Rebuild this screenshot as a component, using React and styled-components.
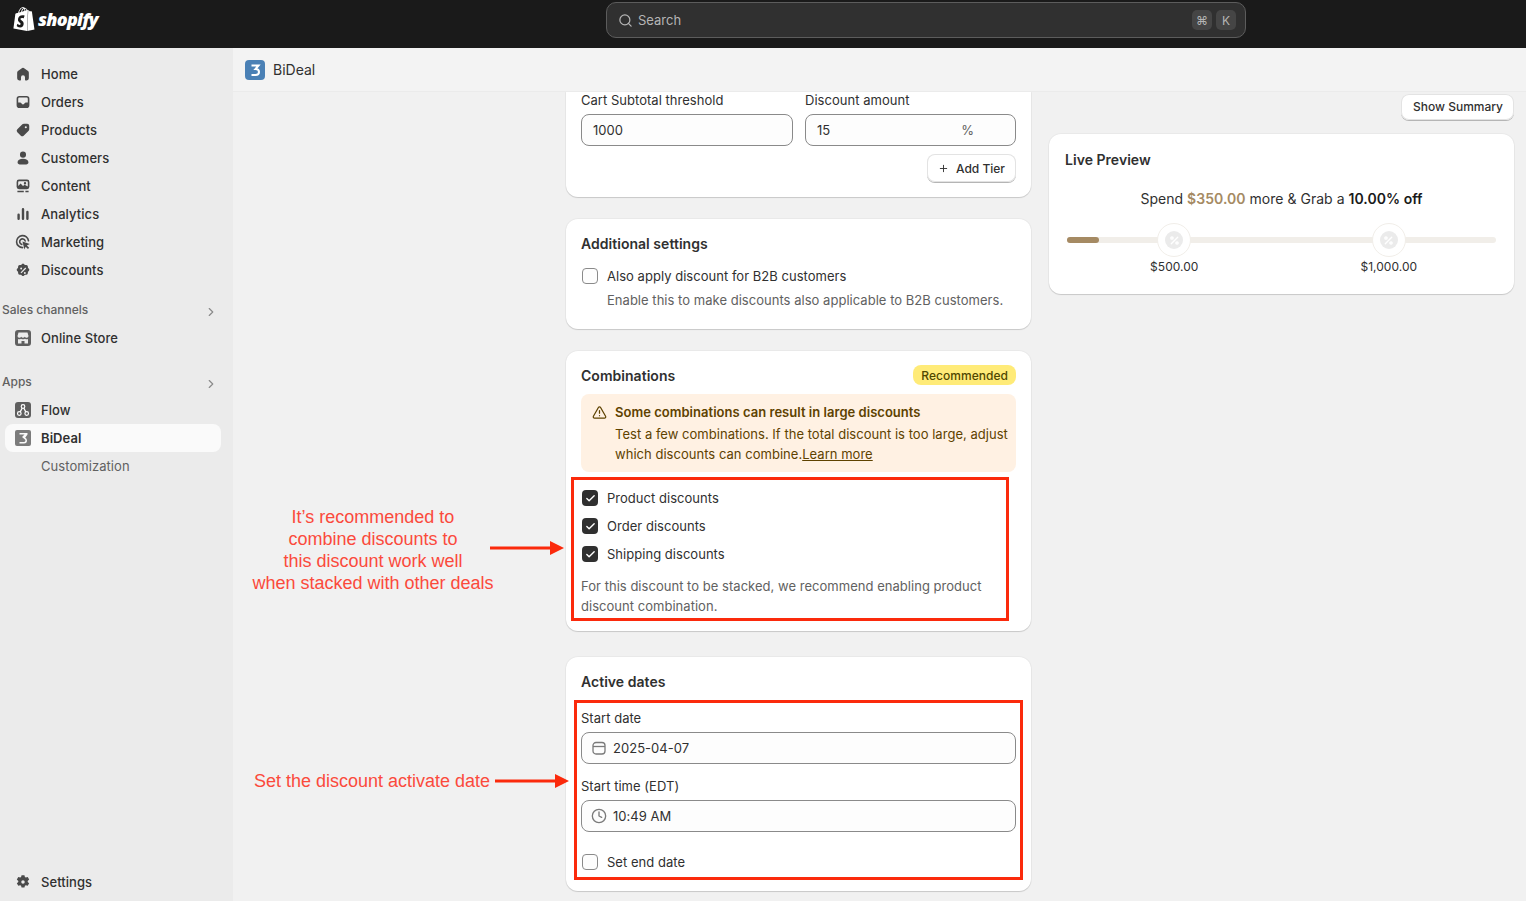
import React from 'react'
import styled, { createGlobalStyle } from 'styled-components'
import { SiShopify } from 'react-icons/si'
import { Search, Plus, Check, TriangleAlert, Clock, ChevronRight, Percent } from 'lucide-react'

const GlobalStyle = createGlobalStyle`
  * { box-sizing: border-box; }
  html, body { margin: 0; height: 100%; overflow: hidden; }
  body {
    font-family: Inter, "Liberation Sans", sans-serif;
    font-size: 13px;
    color: #303030;
    background: #f1f1f1;
  }
`

const Page = styled.div`
  position: relative;
  width: 100%;
  height: 100vh;
  overflow: hidden;
  display: flex;
  flex-direction: column;
`

const TopBar = styled.header`
  height: 48px;
  flex: none;
  background: #1a1a1a;
  display: grid;
  grid-template-columns: 606px 640px 1fr;
  align-items: center;
`

const Logo = styled.div`
  display: flex;
  align-items: center;
  gap: 2px;
  padding: 0 0 10px 12px;
  color: #fff;
  font-family: "Open Sans", sans-serif;
  font-size: 18px;
  font-weight: 800;
  font-style: italic;
  letter-spacing: -0.75px;
`

const SearchBox = styled.div`
  height: 36px;
  margin-top: -8px;
  background: #303030;
  border: 1px solid #5c5c5c;
  border-radius: 10px;
  display: flex;
  align-items: center;
  gap: 5px;
  padding: 0 9px 0 11px;
  color: #b5b5b5;
  font-size: 13px;
  span.label { flex: 1; }
`

const Kbd = styled.span`
  width: 20px;
  height: 20px;
  margin-left: -1px;
  border-radius: 5px;
  background: #454545;
  color: #b5b5b5;
  font-size: 12px;
  display: flex;
  align-items: center;
  justify-content: center;
`

const Body = styled.div`
  flex: 1;
  min-height: 0;
  display: flex;
`

const Sidebar = styled.nav`
  width: 233px;
  flex: none;
  background: #ebebeb;
  padding: 12px 12px 5px 5px;
  display: flex;
  flex-direction: column;
`

const NavItem = styled.div`
  height: 28px;
  display: flex;
  align-items: center;
  gap: 10px;
  border-radius: 8px;
  font-size: 13px;
  letter-spacing: 0.06px;
  font-weight: ${p => (p.$active ? 600 : p.$sub ? 400 : 500)};
  color: ${p => (p.$sub ? '#616161' : '#303030')};
  background: ${p => (p.$active ? '#fafafa' : 'transparent')};
  padding-left: ${p => (p.$sub ? '36px' : '10px')};
  margin-top: ${p => (p.$pushed ? 'auto' : '0')};
`

const NavIcon = styled.svg`
  width: 16px;
  height: 16px;
  flex: none;
  color: ${p => p.$color || '#4a4a4a'};
`

const SectionLabel = styled.div`
  height: 28px;
  margin: ${p => p.$gap}px 0 0 -3px;
  padding: 0 3px 2px 0;
  display: flex;
  align-items: center;
  justify-content: space-between;
  font-size: 12px;
  font-weight: 500;
  color: #616161;
  svg { color: #8a8a8a; margin-top: 5px; }
`

const Main = styled.main`
  flex: 1;
  min-width: 0;
  display: flex;
  flex-direction: column;
`

const AppHeader = styled.div`
  height: 44px;
  flex: none;
  display: flex;
  align-items: center;
  gap: 8px;
  padding-left: 12px;
  font-size: 14px;
  background: #f3f3f3;
  border-bottom: 1px solid #ebebeb;
`

const AppBadge = styled.svg`
  width: 20px;
  height: 20px;
  flex: none;
`

const Columns = styled.div`
  flex: 1;
  min-height: 0;
  overflow: hidden;
  display: grid;
  grid-template-columns: 465px 465px;
  column-gap: 18px;
  padding-left: 333px;
`

const Column = styled.div`
  display: flex;
  flex-direction: column;
`

const Card = styled.section`
  background: #fff;
  border-radius: 12px;
  margin-top: ${p => p.$top || 0}px;
  padding: ${p => p.$pad || '15px 15px 15px'};
  letter-spacing: 0.03px;
  box-shadow: 0 1px 1px rgba(0, 0, 0, 0.14), 0 0 0 1px rgba(0, 0, 0, 0.03);
`

const CutCard = styled(Card)`
  border-radius: 0 0 12px 12px;
  padding: 0 15px 15px;
  height: 105px;
`

const CardHead = styled.div`
  height: 18px;
  display: flex;
  align-items: center;
  justify-content: space-between;
`

const CardTitle = styled.h2`
  margin: 0;
  font-size: 14px;
  font-weight: 600;
  color: #303030;
`

const FieldGrid = styled.div`
  display: grid;
  grid-template-columns: 212px 211px;
  column-gap: 12px;
`

const Label = styled.div`
  height: 16px;
  line-height: 16px;
  margin-bottom: 6px;
  margin-top: ${p => p.$top || 0}px;
  font-size: 13px;
  color: #303030;
`

const Input = styled.div`
  height: 32px;
  border: 1px solid #8a8a8a;
  border-radius: 8px;
  background: #fdfdfd;
  display: flex;
  align-items: center;
  gap: 5px;
  padding: 0 11px;
  font-size: 13px;
  color: #303030;
  svg { color: #7a7a7a; flex: none; margin: 0 1px 0 -2px; }
`

const Suffix = styled.span`
  margin-left: auto;
  margin-right: 30px;
  color: #616161;
`

const ButtonRow = styled.div`
  display: flex;
  justify-content: flex-end;
  margin-top: 8px;
`

const Button = styled.button`
  height: ${p => p.$height || 28}px;
  padding: ${p => p.$pad || '0 11px'};
  border: 0;
  border-radius: 8px;
  background: #fff;
  font-family: inherit;
  font-size: 12px;
  font-weight: 500;
  color: #303030;
  display: flex;
  align-items: center;
  gap: 7px;
  box-shadow: inset 0 0 0 1px #e3e3e3, 0 1px 0 #b5b5b5;
`

const CheckRow = styled.div`
  height: 28px;
  margin-top: ${p => p.$top || 0}px;
  display: flex;
  align-items: center;
  gap: 9px;
  font-size: 13px;
  color: #303030;
`

const Box = styled.span`
  width: 16px;
  height: 16px;
  margin-left: 1px;
  flex: none;
  border-radius: 4px;
  border: ${p => (p.$on ? '0' : '1px solid #8a8a8a')};
  background: ${p => (p.$on ? '#303030' : '#fdfdfd')};
  color: #fff;
  display: flex;
  align-items: center;
  justify-content: center;
`

const Help = styled.p`
  margin: ${p => p.$top || 0}px 0 0 ${p => p.$left || 0}px;
  font-size: 13px;
  line-height: 20px;
  color: #616161;
`

const Recommended = styled.span`
  height: 20px;
  padding: 0 8px;
  border-radius: 8px;
  background: #ffeb78;
  color: #4f4700;
  font-size: 12px;
  font-weight: 500;
  display: flex;
  align-items: center;
`

const Banner = styled.div`
  margin-top: 10px;
  padding: 8px 8px 0 11px;
  height: 78px;
  border-radius: 8px;
  background: #fff1e3;
  color: #5e4200;
  display: flex;
  gap: 8px;
  font-size: 13px;
  line-height: 20px;
  svg { flex: none; margin-top: 3px; }
  b { font-weight: 600; display: block; margin-bottom: 2px; }
  a { color: inherit; text-decoration: underline; }
`

const CheckGroup = styled.div`
  margin-top: 12px;
`

const ShowRow = styled.div`
  height: 42px;
  padding-top: 2px;
  display: flex;
  justify-content: flex-end;
`

const PreviewText = styled.p`
  margin: 21px 0 0;
  text-align: center;
  font-size: 14px;
  line-height: 20px;
  color: #303030;
  em { font-style: normal; font-weight: 600; color: #a58a63; }
  b { font-weight: 600; color: #1a1a1a; }
`

const Track = styled.div`
  position: relative;
  height: 6px;
  margin: 28px 2px 0;
  border-radius: 3px;
  background: #f1eee9;
`

const TrackFill = styled.div`
  height: 100%;
  border-radius: 3px;
  background: #a58a63;
`

const Milestone = styled.div`
  position: absolute;
  top: -14px;
  width: 34px;
  height: 34px;
  margin-left: -17px;
  border-radius: 50%;
  background: #fff;
  border: 1px solid #f1eee9;
  display: flex;
  align-items: center;
  justify-content: center;
`

const MilestoneDot = styled.span`
  width: 18px;
  height: 18px;
  border-radius: 50%;
  background: #ebebeb;
  color: #fff;
  display: flex;
  align-items: center;
  justify-content: center;
`

const MilestoneLabel = styled.span`
  position: absolute;
  top: 22px;
  transform: translateX(-50%);
  font-size: 12px;
  line-height: 16px;
  white-space: nowrap;
  color: #303030;
`

const PreviewCard = styled(Card)`
  height: 160px;
  padding: 17px 16px;
`

const RedBox = styled.div`
  position: absolute;
  left: ${p => p.$x}px;
  top: ${p => p.$y}px;
  width: ${p => p.$w}px;
  height: ${p => p.$h}px;
  border: 3px solid #fb2a0c;
  pointer-events: none;
`

const Note = styled.div`
  position: absolute;
  left: ${p => p.$x}px;
  top: ${p => p.$y}px;
  font-family: "Liberation Sans", Arial, sans-serif;
  font-size: 18px;
  line-height: 22px;
  text-align: center;
  white-space: nowrap;
  color: #fb4a3c;
  transform: translateX(-50%);
`

const Arrow = styled.svg`
  position: absolute;
  left: ${p => p.$x}px;
  top: ${p => p.$y}px;
  width: 74px;
  height: 14px;
  color: #fb2a0c;
`

const Paths = {
  home: <path fill="currentColor" d="M9 2.400a1.700 1.700 0 0 1 2 0l5.300 4a2.400 2.400 0 0 1 1 2v7a2.600 2.600 0 0 1-2.600 2.600h-1.500a.7.7 0 0 1-.7-.7V14a2.500 2.500 0 0 0-5 0v3.300a.7.7 0 0 1-.7.7H5.300a2.600 2.600 0 0 1-2.600-2.600v-7a2.400 2.400 0 0 1 1-2z" />,
  orders: <path fill="currentColor" fillRule="evenodd" d="M5.500 2.500h9a3.500 3.500 0 0 1 3.500 3.500v8a3.500 3.500 0 0 1-3.500 3.500h-9a3.500 3.500 0 0 1-3.500-3.500v-8a3.500 3.500 0 0 1 3.500-3.500zm0 2a1.500 1.500 0 0 0-1.500 1.500v4.500h2.300c.8 0 1.400.5 1.700 1.200.3.800 1 1.300 2 1.300s1.700-.5 2-1.300c.3-.7.900-1.200 1.700-1.200h2.300v-4.500a1.500 1.500 0 0 0-1.500-1.500z" />,
  products: <path fill="currentColor" fillRule="evenodd" d="M11 2.200h4.300a2.500 2.500 0 0 1 2.500 2.500V9c0 .7-.3 1.300-.7 1.800l-6.300 6.300a2.500 2.500 0 0 1-3.500 0l-4.400-4.400a2.500 2.500 0 0 1 0-3.500l6.300-6.300c.5-.4 1.100-.7 1.800-.7zm2.500 3a1.300 1.300 0 1 0 0 2.600 1.300 1.300 0 0 0 0-2.600z" />,
  customers: <path fill="currentColor" d="M10 2a3.800 3.800 0 1 1 0 7.600 3.800 3.800 0 0 1 0-7.600zM3.200 15.200c0-2.600 2.800-4.300 6.800-4.300s6.800 1.700 6.800 4.300c0 1.600-1.200 2.800-2.800 2.800H6c-1.600 0-2.800-1.200-2.800-2.800z" />,
  content: <path fill="currentColor" fillRule="evenodd" d="M5 2h10a3 3 0 0 1 3 3v6a3 3 0 0 1-3 3H5a3 3 0 0 1-3-3V5a3 3 0 0 1 3-3zm0 2a1 1 0 0 0-1 1v5l3-3 3 3 2-1.500 4 2V5a1 1 0 0 0-1-1zm7.500 1a1.500 1.500 0 1 1 0 3 1.500 1.500 0 0 1 0-3zM3 16h8v1.800H3zm10 0h4v1.800h-4z" />,
  analytics: <path fill="currentColor" d="M8.500 4a1.500 1.500 0 0 1 3 0v12a1.500 1.500 0 0 1-3 0zM14 7.500a1.500 1.500 0 0 1 3 0V16a1.500 1.500 0 0 1-3 0zM3 11a1.500 1.500 0 0 1 3 0v5a1.500 1.500 0 0 1-3 0z" />,
  marketing: (
    <g fill="none" stroke="currentColor" strokeWidth="2">
      <path d="M9.500 17a7.500 7.500 0 1 1 7.400-8.500" strokeLinecap="round" />
      <path d="M8.500 13a3.500 3.500 0 1 1 4.200-4.400" strokeLinecap="round" />
      <path fill="currentColor" stroke="none" d="M9.300 9.300l9.200 3.300-3.700 1.800 2.900 2.900-1.500 1.500-2.900-2.900-1.500 3.600z" />
    </g>
  ),
  discounts: <path fill="currentColor" fillRule="evenodd" d="M8.600 1.700a2 2 0 0 1 2.800 0l1.100 1.100 1.500-.1a2 2 0 0 1 2.100 2l.1 1.600 1.100 1.100a2 2 0 0 1 0 2.800l-1.100 1.100-.1 1.600a2 2 0 0 1-2.100 2l-1.500-.1-1.100 1.100a2 2 0 0 1-2.800 0l-1.100-1.100-1.500.1a2 2 0 0 1-2.100-2l-.1-1.600-1.100-1.100a2 2 0 0 1 0-2.800l1.100-1.100.1-1.600a2 2 0 0 1 2.100-2l1.500.1zM12.900 6l-6 6 1.100 1.100 6-6zM7.700 6a1.200 1.200 0 1 0 0 2.400 1.200 1.200 0 0 0 0-2.400zm4.600 5.600a1.200 1.200 0 1 0 0 2.400 1.200 1.200 0 0 0 0-2.400z" transform="translate(0 1)" />,
  settings: <path fill="currentColor" fillRule="evenodd" d="M8.200 1.500h3.600l.6 2.300 1.100.7 2.400-.7 1.800 3.100-1.800 1.700v1.300l1.800 1.700-1.800 3.100-2.400-.7-1.100.7-.6 2.300H8.200l-.6-2.300-1.100-.7-2.400.7-1.800-3.100 1.800-1.700V8.600L2.300 6.900l1.800-3.100 2.400.7 1.100-.7zM10 7.800a2.200 2.200 0 1 0 0 4.400 2.200 2.200 0 0 0 0-4.400z" />,
  store: <path fill="currentColor" fillRule="evenodd" d="M5 2h10a3 3 0 0 1 3 3v10a3 3 0 0 1-3 3H5a3 3 0 0 1-3-3V5a3 3 0 0 1 3-3zm.5 2.500L4.500 8a2 2 0 0 0 3.700.8 2.200 2.200 0 0 0 3.600 0A2 2 0 0 0 15.500 8l-1-3.500zM5 11v4.500h3.500V13h3v2.500H15V11a3.500 3.500 0 0 1-3-.3 3.900 3.900 0 0 1-4 0 3.500 3.500 0 0 1-3 .3z" />,
  flow: (
    <g>
      <rect x="2" y="2" width="16" height="16" rx="3" fill="currentColor" />
      <g fill="none" stroke="#fff" strokeWidth="1.200">
        <circle cx="10" cy="6.500" r="1.800" />
        <circle cx="6.300" cy="13.500" r="1.800" />
        <circle cx="13.700" cy="13.500" r="1.800" />
        <path d="M9.200 8.100l-2 3.800M10.800 8.100l2 3.800" />
      </g>
    </g>
  ),
  bideal: <path fill="currentColor" fillRule="evenodd" d="M4 2h12a2 2 0 0 1 2 2v12a2 2 0 0 1-2 2H4a2 2 0 0 1-2-2V4a2 2 0 0 1 2-2zm2.500 3v1.500h5L9 9l3 2.500a1.500 1.500 0 0 1-1.500 2.500H6.500v1.500h4.500a3 3 0 0 0 3-3 3 3 0 0 0-1.800-2.700L14.500 6.500V5z" />,
}

const Icon = ({ name, color, full }) => (
  <NavIcon viewBox={full ? '2 2 16 16' : '0 0 20 20'} $color={color}>{Paths[name]}</NavIcon>
)

const mainNav = [
  ['home', 'Home'],
  ['orders', 'Orders'],
  ['products', 'Products'],
  ['customers', 'Customers'],
  ['content', 'Content'],
  ['analytics', 'Analytics'],
  ['marketing', 'Marketing'],
  ['discounts', 'Discounts'],
]

const CheckBox = ({ on }) => (
  <Box $on={on}>{on && <Check size={11} strokeWidth={3} />}</Box>
)

const Calendar = () => (
  <svg width="16" height="16" viewBox="0 0 16 16" fill="none" stroke="currentColor" strokeWidth="1.300">
    <rect x="2" y="2.500" width="12" height="11.500" rx="3" />
    <path d="M2 6.500h12" />
  </svg>
)

const App = () => {
  return (
    <Page>
      <GlobalStyle />
      <TopBar>
        <Logo>
          <SiShopify size={24} />
          <span>shopify</span>
        </Logo>
        <SearchBox>
          <Search size={15} />
          <span className="label">Search</span>
          <Kbd>⌘</Kbd>
          <Kbd>K</Kbd>
        </SearchBox>
      </TopBar>

      <Body>
        <Sidebar>
          {mainNav.map(([icon, text]) => (
            <NavItem key={text}>
              <Icon name={icon} />
              {text}
            </NavItem>
          ))}
          <SectionLabel $gap={12}>
            Sales channels
            <ChevronRight size={14} />
          </SectionLabel>
          <NavItem>
            <Icon name="store" color="#5f5f5f" full />
            Online Store
          </NavItem>
          <SectionLabel $gap={16}>
            Apps
            <ChevronRight size={14} />
          </SectionLabel>
          <NavItem>
            <Icon name="flow" color="#5f5f5f" full />
            Flow
          </NavItem>
          <NavItem $active>
            <Icon name="bideal" color="#7c7c7c" full />
            BiDeal
          </NavItem>
          <NavItem $sub>Customization</NavItem>
          <NavItem $pushed>
            <Icon name="settings" />
            Settings
          </NavItem>
        </Sidebar>

        <Main>
          <AppHeader>
            <AppBadge viewBox="0 0 20 20">
              <rect width="20" height="20" rx="4" fill="#4a80b5" />
              <path d="M6.500 5.500h7l-3 3.500c2.500 0 3.500 1.300 3.500 3s-1.500 3-3.500 3h-4" fill="none" stroke="#fff" strokeWidth="2" />
            </AppBadge>
            BiDeal
          </AppHeader>

          <Columns>
            <Column>
              <CutCard>
                <FieldGrid>
                  <div>
                    <Label>Cart Subtotal threshold</Label>
                    <Input>1000</Input>
                  </div>
                  <div>
                    <Label>Discount amount</Label>
                    <Input>
                      15
                      <Suffix>%</Suffix>
                    </Input>
                  </div>
                </FieldGrid>
                <ButtonRow>
                  <Button>
                    <Plus size={11} />
                    Add Tier
                  </Button>
                </ButtonRow>
              </CutCard>

              <Card $top={22} $pad="15px 15px 19px">
                <CardHead>
                  <CardTitle>Additional settings</CardTitle>
                </CardHead>
                <CheckRow $top={10}>
                  <CheckBox />
                  Also apply discount for B2B customers
                </CheckRow>
                <Help $left={26}>Enable this to make discounts also applicable to B2B customers.</Help>
              </Card>

              <Card $top={22}>
                <CardHead>
                  <CardTitle>Combinations</CardTitle>
                  <Recommended>Recommended</Recommended>
                </CardHead>
                <Banner>
                  <TriangleAlert size={15} />
                  <div>
                    <b>Some combinations can result in large discounts</b>
                    Test a few combinations. If the total discount is too large, adjust which discounts can combine.<a>Learn more</a>
                  </div>
                </Banner>
                <CheckGroup>
                  <CheckRow><CheckBox on />Product discounts</CheckRow>
                  <CheckRow><CheckBox on />Order discounts</CheckRow>
                  <CheckRow><CheckBox on />Shipping discounts</CheckRow>
                </CheckGroup>
                <Help $top={8}>For this discount to be stacked, we recommend enabling product discount combination.</Help>
              </Card>

              <Card $top={26}>
                <CardHead>
                  <CardTitle>Active dates</CardTitle>
                </CardHead>
                <Label $top={20}>Start date</Label>
                <Input>
                  <Calendar />
                  2025-04-07
                </Input>
                <Label $top={14}>Start time (EDT)</Label>
                <Input>
                  <Clock size={16} />
                  10:49 AM
                </Input>
                <CheckRow $top={16}>
                  <CheckBox />
                  Set end date
                </CheckRow>
              </Card>
            </Column>

            <Column>
              <ShowRow>
                <Button $height={26} $pad="0 11px 1px 12px">Show Summary</Button>
              </ShowRow>
              <PreviewCard>
                <CardTitle>Live Preview</CardTitle>
                <PreviewText>
                  Spend <em>$350.00</em> more &amp; Grab a <b>10.00% off</b>
                </PreviewText>
                <Track>
                  <TrackFill style={{ width: `${(150 / 1200) * 100 * 0.6}%` }} />
                  <Milestone style={{ left: '25%' }}>
                    <MilestoneDot><Percent size={11} strokeWidth={3} /></MilestoneDot>
                  </Milestone>
                  <MilestoneLabel style={{ left: '25%' }}>$500.00</MilestoneLabel>
                  <Milestone style={{ left: '75%' }}>
                    <MilestoneDot><Percent size={11} strokeWidth={3} /></MilestoneDot>
                  </Milestone>
                  <MilestoneLabel style={{ left: '75%' }}>$1,000.00</MilestoneLabel>
                </Track>
              </PreviewCard>
            </Column>
          </Columns>
        </Main>
      </Body>

      <Note $x={373} $y={506}>
        It’s recommended to<br />combine discounts to<br />this discount work well<br />when stacked with other deals
      </Note>
      <Note $x={372} $y={770}>Set the discount activate date</Note>
      <Arrow viewBox="0 0 74 14" $x={490} $y={541}>
        <path d="M0 7h62" stroke="currentColor" strokeWidth="3" />
        <path d="M60 0l14 7-14 7z" fill="currentColor" />
      </Arrow>
      <Arrow viewBox="0 0 74 14" $x={495} $y={774}>
        <path d="M0 7h62" stroke="currentColor" strokeWidth="3" />
        <path d="M60 0l14 7-14 7z" fill="currentColor" />
      </Arrow>
      <RedBox $x={571} $y={477} $w={438} $h={144} />
      <RedBox $x={574} $y={700} $w={449} $h={180} />
    </Page>
  )
}

export default App
